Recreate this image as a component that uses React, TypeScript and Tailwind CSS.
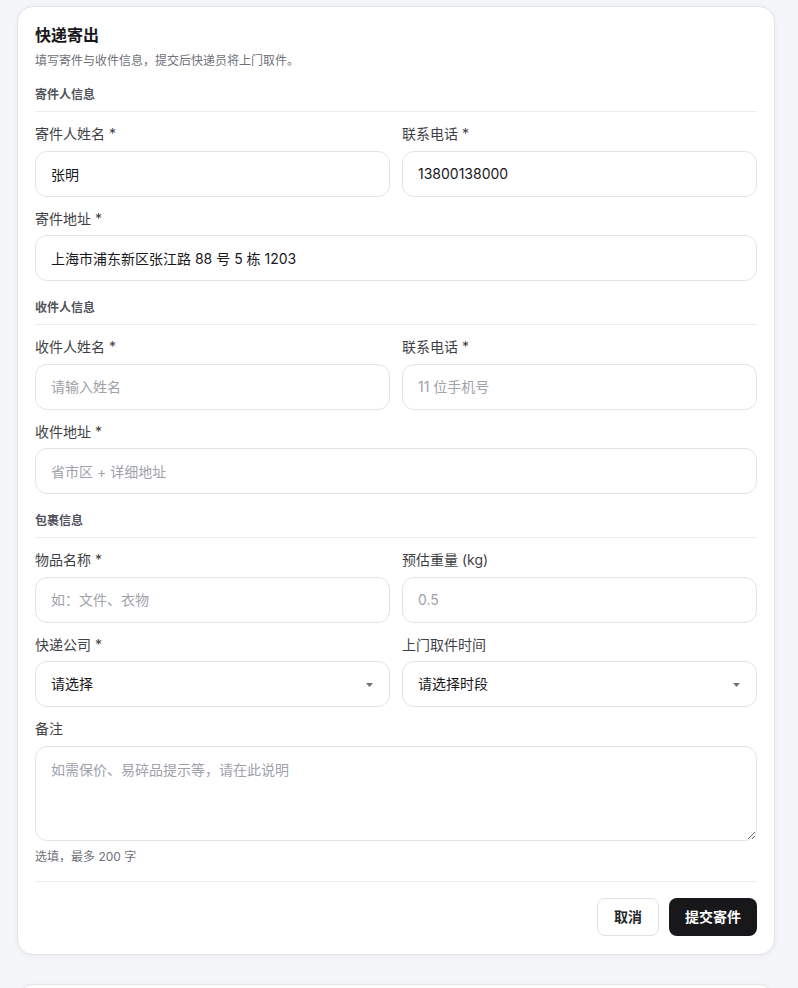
import React from 'react';

const font = { fontFamily: 'Inter, "Noto Sans CJK SC", sans-serif' };

function Label({ children }: { children: React.ReactNode }) {
  return (
    <label className="mb-[6.5px] block text-sm leading-5 text-[#3f3f46]">{children}</label>
  );
}

function TextField({
  label,
  value,
  placeholder,
}: {
  label: string;
  value?: string;
  placeholder?: string;
}) {
  return (
    <div>
      <Label>{label}</Label>
      <input
        defaultValue={value}
        placeholder={placeholder}
        className="block h-[46px] w-full rounded-xl border border-[#e4e4e7] bg-white px-[15px] text-sm text-[#18181b] outline-none placeholder:text-[#a1a1aa]"
      />
    </div>
  );
}

function SelectField({ label, value }: { label: string; value: string }) {
  return (
    <div>
      <Label>{label}</Label>
      <div className="flex h-[46px] w-full items-center justify-between rounded-xl border border-[#e4e4e7] bg-white pl-[15px] pr-4 text-sm text-[#18181b]">
        <span>{value}</span>
        <svg width="7" height="4" viewBox="0 0 7 4" className="mt-px">
          <path d="M0 0h7L3.5 4z" fill="#71717a" />
        </svg>
      </div>
    </div>
  );
}

function Section({
  title,
  first,
  children,
}: {
  title: string;
  first?: boolean;
  children: React.ReactNode;
}) {
  return (
    <div className={first ? 'mt-[18px]' : 'mt-[19px]'}>
      <div className="border-b border-[#ececf0] pb-2 text-xs font-semibold leading-4 text-[#52525b]">
        {title}
      </div>
      <div className="mt-3 flex flex-col gap-3">{children}</div>
    </div>
  );
}

export default function App() {
  return (
    <div className="min-h-screen bg-[#f4f5f8] pt-[6px]" style={font}>
      <div className="ml-[17px] w-[758px]">
        <div className="rounded-2xl border border-[#e4e4e9] bg-white px-[17px] py-[18px] shadow-[0_1px_4px_rgba(16,24,40,0.05)]">
          <h1 className="text-base font-bold leading-5 text-[#18181b]">快递寄出</h1>
          <p className="mt-2 text-xs leading-4 text-[#71717a]">
            填写寄件与收件信息，提交后快递员将上门取件。
          </p>

          <Section title="寄件人信息" first>
            <div className="grid grid-cols-2 gap-3">
              <TextField label="寄件人姓名 *" value="张明" />
              <TextField label="联系电话 *" value="13800138000" />
            </div>
            <TextField label="寄件地址 *" value="上海市浦东新区张江路 88 号 5 栋 1203" />
          </Section>

          <Section title="收件人信息">
            <div className="grid grid-cols-2 gap-3">
              <TextField label="收件人姓名 *" placeholder="请输入姓名" />
              <TextField label="联系电话 *" placeholder="11 位手机号" />
            </div>
            <TextField label="收件地址 *" placeholder="省市区 + 详细地址" />
          </Section>

          <Section title="包裹信息">
            <div className="grid grid-cols-2 gap-3">
              <TextField label="物品名称 *" placeholder="如：文件、衣物" />
              <TextField label="预估重量 (kg)" placeholder="0.5" />
            </div>
            <div className="grid grid-cols-2 gap-3">
              <SelectField label="快递公司 *" value="请选择" />
              <SelectField label="上门取件时间" value="请选择时段" />
            </div>
            <div>
              <Label>备注</Label>
              <textarea
                placeholder="如需保价、易碎品提示等，请在此说明"
                className="block h-[95px] w-full resize-y rounded-xl border border-[#e4e4e7] bg-white px-[15px] py-[13px] text-sm leading-5 text-[#18181b] outline-none placeholder:text-[#a1a1aa]"
              />
              <p className="mt-2 text-xs leading-4 text-[#71717a]">选填，最多 200 字</p>
            </div>
          </Section>

          <div className="mt-4 flex justify-end gap-2.5 border-t border-[#ececf0] pt-4">
            <button className="h-[38px] w-[62px] rounded-lg border border-[#e4e4e7] bg-white text-sm font-semibold text-[#27272a]">
              取消
            </button>
            <button className="h-[38px] w-[88px] rounded-lg bg-[#18181b] text-sm font-semibold text-white">
              提交寄件
            </button>
          </div>
        </div>

        <div className="mt-[29px] h-[120px] rounded-2xl border border-[#e4e4e9] bg-white shadow-[0_1px_4px_rgba(16,24,40,0.05)]" />
      </div>
    </div>
  );
}
